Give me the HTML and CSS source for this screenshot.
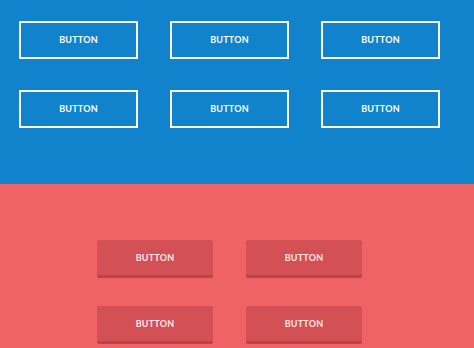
FILE: index.html
```html
<!DOCTYPE html>
<html lang="en">
<head>
    <meta charset="UTF-8">
    <meta name="viewport" content="width=device-width, initial-scale=1.0">
    <title>Buttons</title>
    <link rel="stylesheet" href="styles.css">
</head>
<body>
    <section class="blue_area">
        <div class="ghost_grid">
            <button class="ghost_btn">BUTTON</button>
            <button class="ghost_btn">BUTTON</button>
            <button class="ghost_btn">BUTTON</button>
            <button class="ghost_btn">BUTTON</button>
            <button class="ghost_btn">BUTTON</button>
            <button class="ghost_btn">BUTTON</button>
        </div>
    </section>
    <section class="red_area">
        <div class="flat_grid">
            <button class="flat_btn">BUTTON</button>
            <button class="flat_btn">BUTTON</button>
            <button class="flat_btn">BUTTON</button>
            <button class="flat_btn">BUTTON</button>
        </div>
    </section>
</body>
</html>
```

FILE: styles.css
```css
* {
    box-sizing: border-box;
    margin: 0;
    padding: 0;
}
body {
    font-family: Lato, "Open Sans", sans-serif;
    background-color: #f06365;
    overflow: hidden;
}
button {
    font-family: Lato, "Open Sans", sans-serif;
    font-weight: 700;
    font-size: 9px;
    letter-spacing: 0.2px;
    color: #fff;
    cursor: pointer;
}
.blue_area {
    background-color: #1083cc;
    height: 184px;
    padding: 21px 0 0 19px;
}
.ghost_grid {
    display: grid;
    grid-template-columns: repeat(3, 119px);
    column-gap: 32px;
    row-gap: 31px;
}
.ghost_btn {
    height: 38px;
    padding-bottom: 1px;
    background: transparent;
    border: 2px solid #fff;
}
.red_area {
    height: 164px;
    padding-top: 56px;
}
.flat_grid {
    display: grid;
    grid-template-columns: repeat(2, 116px);
    column-gap: 33px;
    row-gap: 28px;
    justify-content: center;
    padding-right: 15px;
}
.flat_btn {
    height: 38px;
    padding-bottom: 1px;
    background-color: #d35155;
    border: none;
    border-radius: 2px;
    border-bottom: 3px solid #b9454a;
    color: #fde8e8;
}
```
